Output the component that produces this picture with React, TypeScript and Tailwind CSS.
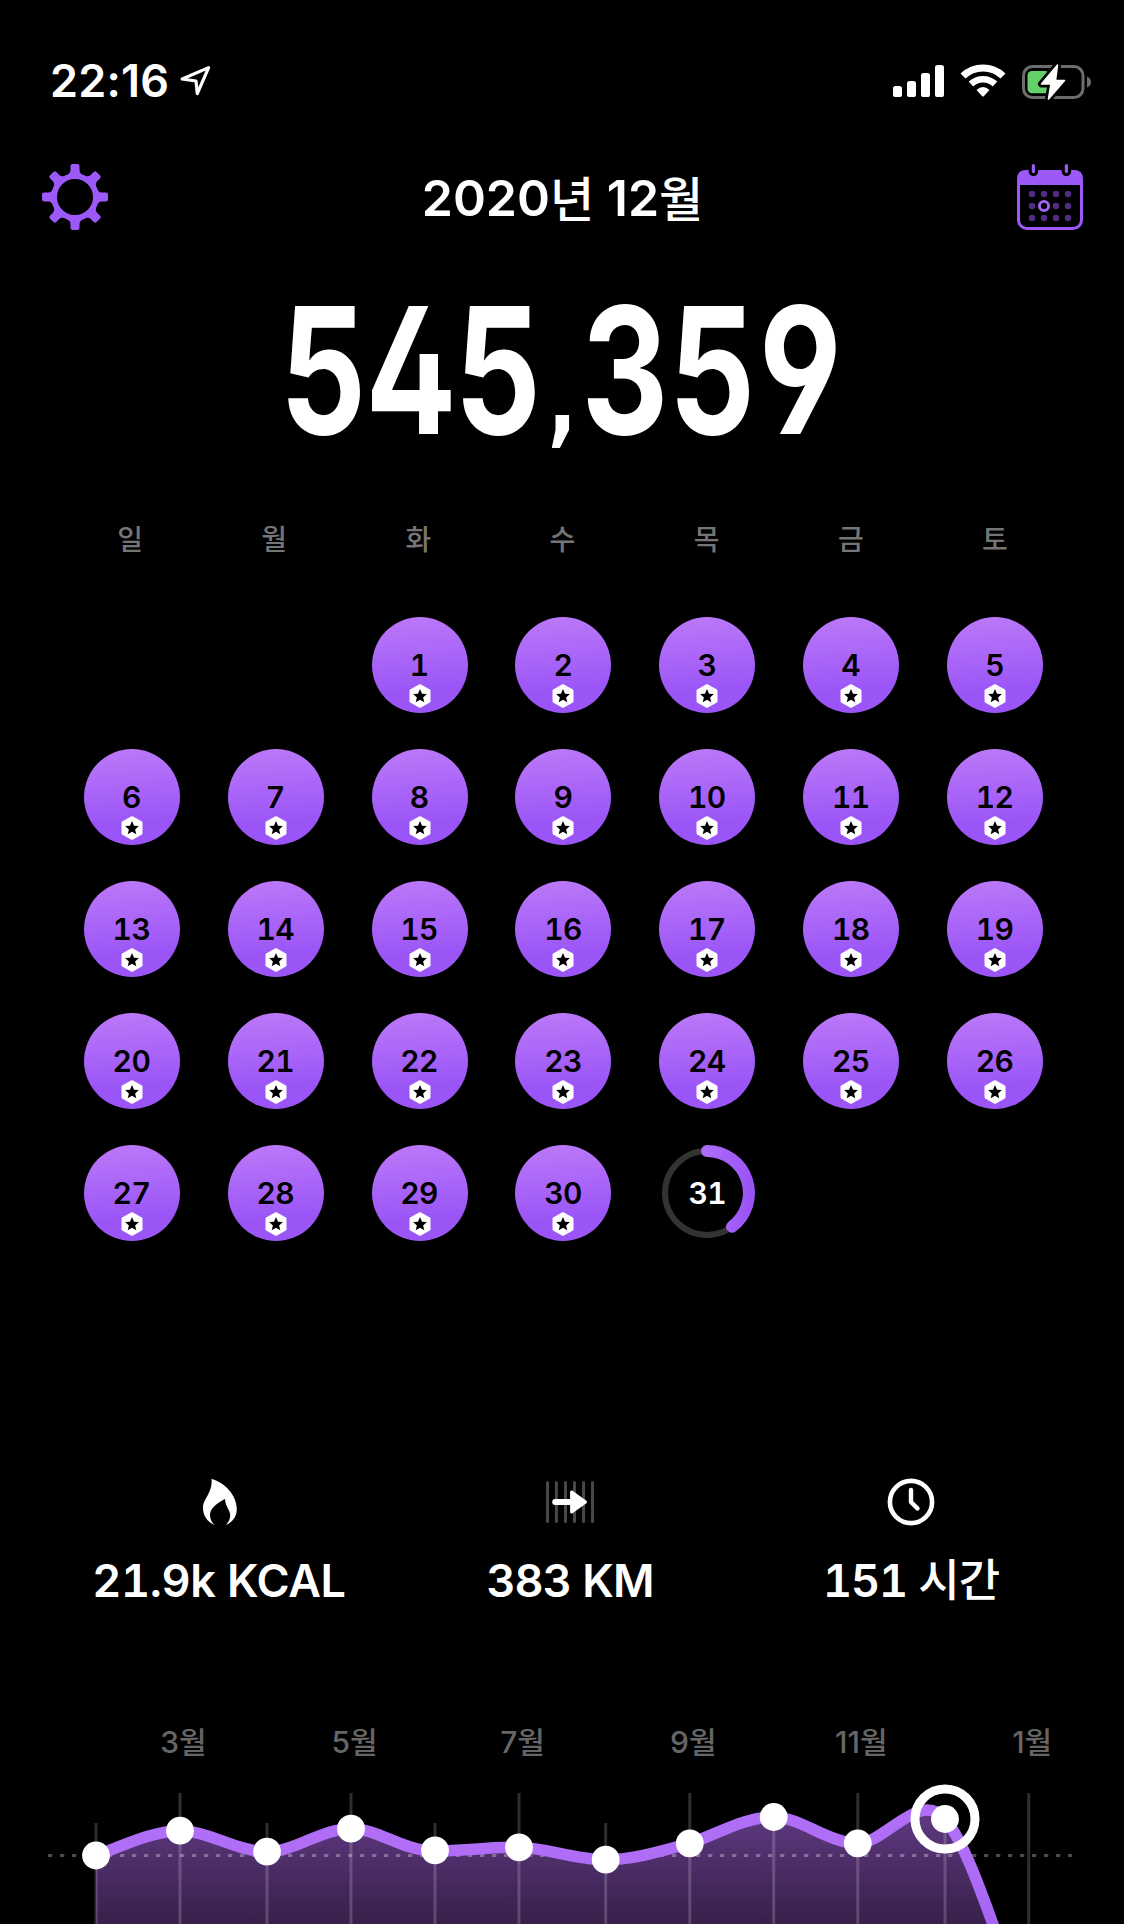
import React from "react";

interface ChartPoint {
    x: number;
    y: number;
    label?: string;
}

const weekdays = ["일", "월", "화", "수", "목", "금", "토"];

const stats = [
    { id: "kcal", value: "21.9k", unit: "KCAL", width: "w-[342px]", tracking: "tracking-[-0.4px]" },
    { id: "distance", value: "383", unit: "KM", width: "w-[360px]", tracking: "tracking-[-0.9px]" },
    { id: "time", value: "151", unit: "시간", width: "w-[322px]", tracking: "tracking-[-1px]" },
];

const points: ChartPoint[] = [
    { x: 96, y: 155.5 },
    { x: 180, y: 130.7, label: "3월" },
    { x: 267, y: 151.7 },
    { x: 351, y: 128.7, label: "5월" },
    { x: 435, y: 150.3 },
    { x: 519, y: 147.3, label: "7월" },
    { x: 605.7, y: 159.7 },
    { x: 689.8, y: 143.3, label: "9월" },
    { x: 773.7, y: 117 },
    { x: 857.8, y: 143.3, label: "11월" },
    { x: 945, y: 119 },
];

const curve =
    "M96 155.5 C118 148 152 130.7 180 130.7 C208 130.7 238 151.7 267 151.7 C295 151.7 321 128.7 351 128.7 " +
    "C379 128.7 402 151 435 151 C463 151 489 147 519 147.3 C547 148 574 159.7 605.7 159.7 " +
    "C633 159.7 662 151 689.8 143.3 C718 134 744 117 773.7 117 C800 117 829 143.3 857.8 143.3 " +
    "C885 143.3 920 89 945 119 C962 139 978 180 1014 284";

const StatusBar = () => (
    <div className="flex h-[130px] items-start justify-between pl-[50px] pr-[32px] pt-[60px]">
        <div className="flex items-start">
            <span className="w-[129px] whitespace-nowrap text-[45px] font-semibold leading-[42px] tracking-[0.2px]">22:16</span>
            <svg className="mt-[4px]" width="34" height="34" viewBox="0 0 34 34" fill="none" stroke="white" strokeWidth="3.2" strokeLinejoin="round">
                <path d="M29.6 3.6 L3.2 15 L17 17 L18.3 29.7 Z" />
            </svg>
        </div>
        <div className="flex items-start pt-[4px]">
            <svg width="51" height="34" viewBox="0 0 51 34" fill="white">
                <rect x="0" y="22" width="9" height="11" rx="2.6" />
                <rect x="14" y="17" width="9" height="16" rx="2.6" />
                <rect x="28" y="9" width="9" height="24" rx="2.6" />
                <rect x="42" y="1" width="9" height="32" rx="2.6" />
            </svg>
            <svg className="ml-[16px]" width="46" height="34" viewBox="0 0 46 34">
                <path d="M3 12 A29 29 0 0 1 43 12" fill="none" stroke="white" strokeWidth="7.2" />
                <path d="M11 20 A17.5 17.5 0 0 1 35 20" fill="none" stroke="white" strokeWidth="6.6" />
                <path d="M16.5 26 Q23 20 29.5 26 L24 32 Q23 33 22 32 Z" fill="white" />
            </svg>
            <svg className="ml-[16px]" width="70" height="38" viewBox="0 -1 70 38">
                <rect x="1.5" y="1.5" width="59.5" height="31" rx="9" fill="none" stroke="#6d6d6d" strokeWidth="3" />
                <path d="M65 11.5 Q69 13 69 17 Q69 21 65 22.5 Z" fill="#6d6d6d" />
                <rect x="5.5" y="6" width="22" height="22.3" rx="4.5" fill="#65cf6a" />
                <path d="M35.5 0 L19.5 19 L29 19 L26.5 34 L42.5 15.5 L33.5 15.5 Z" fill="white" stroke="black" strokeWidth="7" strokeLinejoin="round" />
                <path d="M35.5 0 L19.5 19 L29 19 L26.5 34 L42.5 15.5 L33.5 15.5 Z" fill="white" stroke="white" strokeWidth="1.6" strokeLinejoin="round" />
            </svg>
        </div>
    </div>
);

const GearIcon = () => (
    <svg width="66" height="66" viewBox="-33 -33 66 66" fill="#9d58f8">
        <circle r="20.8" fill="none" stroke="#9d58f8" strokeWidth="5.6" />
        {[0, 45, 90, 135, 180, 225, 270, 315].map((angle) => (
            <path
                key={angle}
                transform={`rotate(${angle})`}
                d="M-9.8 -21.4 C-6.5 -22.6 -4.5 -24 -4.5 -27 V-31 Q-4.5 -33 -2.5 -33 H2.5 Q4.5 -33 4.5 -31 V-27 C4.5 -24 6.5 -22.6 9.8 -21.4 Z"
            />
        ))}
    </svg>
);

const CalendarIcon = () => (
    <svg width="66" height="66" viewBox="0 0 66 66">
        <rect x="1.5" y="7.5" width="63" height="57" rx="8.5" fill="none" stroke="#9d58f8" strokeWidth="3" />
        <path d="M0 21 V15 Q0 6 9 6 H57 Q66 6 66 15 V21 Z" fill="#9d58f8" />
        {[16.4, 49.4].map((x) => (
            <g key={x} strokeLinecap="round">
                <path d={`M${x} 1.5 V7.5`} stroke="black" strokeWidth="9.4" />
                <path d={`M${x} 1.6 V7.6`} stroke="#9d58f8" strokeWidth="3.2" />
            </g>
        ))}
        {[30, 42, 54].map((y) =>
            [15, 27, 39, 51].map((x) => <circle key={`${x}-${y}`} cx={x} cy={y} r="3.2" fill="#512c80" />)
        )}
        <circle cx="27" cy="42" r="4.6" fill="black" stroke="#a465f7" strokeWidth="2.9" />
    </svg>
);

// Jour avec objectif atteint
const DayCircle = ({ day }: { day: number }) => (
    <div className="relative flex h-24 w-24 items-center justify-center rounded-full bg-[linear-gradient(175deg,#bb78f8_3%,#9b55f7_75%)]">
        <span className="pr-px text-[30px] font-[560] leading-none tracking-[-0.6px] tabular-nums text-black">{day}</span>
        <svg className="absolute left-[37px] top-[67px]" width="22" height="24" viewBox="-11 -12 22 24">
            <path d="M0 -10.6 L9.3 -5.5 V5.5 L0 10.6 L-9.3 5.5 V-5.5 Z" fill="white" stroke="white" strokeWidth="2.4" strokeLinejoin="round" />
            <path d="M0 -6.9 L2 -2.3 L6.9 -1.9 L3.1 1.4 L4.3 6.3 L0 3.7 L-4.3 6.3 L-3.1 1.4 L-6.9 -1.9 L-2 -2.3 Z" fill="black" />
        </svg>
    </div>
);

// Jour en cours
const TodayRing = ({ day }: { day: number }) => (
    <div className="relative flex h-24 w-24 items-center justify-center">
        <svg className="absolute inset-0" width="96" height="96" viewBox="-48 -48 96 96" fill="none">
            <defs>
                <linearGradient id="ring" x1="0" y1="0" x2="1" y2="0">
                    <stop offset="0" stopColor="#ad6bf8" />
                    <stop offset="1" stopColor="#9b55f7" />
                </linearGradient>
            </defs>
            <circle r="42" stroke="#333333" strokeWidth="6" />
            <path d="M0 -42 A42 42 0 0 1 25 33.7" stroke="url(#ring)" strokeWidth="12" strokeLinecap="round" />
        </svg>
        <span className="text-[30px] font-[560] leading-none tracking-[-0.6px] tabular-nums text-white">{day}</span>
    </div>
);

const StatIcon = ({ id }: { id: string }) => {
    if (id === "kcal") {
        return (
            <svg width="39" height="50" viewBox="0 0 39 50" fill="white">
                <path d="M11.6 2.7 C25 7 36.8 19 36.8 33 C36.8 41 32 46.5 25.8 49 C28.6 46 30.2 43 30.2 39.5 C30.2 34 25.5 31 25 23 C14.5 28 10 34 10 39 C10 43 12 47 14.8 49 C7 46 3 39 3 32 C3 22 12.5 18 11.6 2.7 Z" />
            </svg>
        );
    }
    if (id === "distance") {
        return (
            <svg width="48" height="50" viewBox="0 0 48 50">
                <path d="M1.5 6.5V45.5M10.4 6.5V45.5M19.5 6.5V45.5M28.5 6.5V45.5M37.6 6.5V45.5M46.5 6.5V45.5" stroke="#484848" strokeWidth="3" strokeLinecap="round" />
                <path d="M9.2 26 H26" stroke="white" strokeWidth="6" strokeLinecap="round" />
                <path d="M25.6 16 L39.5 26 L25.6 36 Z" fill="white" stroke="white" strokeWidth="3" strokeLinejoin="round" />
            </svg>
        );
    }
    return (
        <svg width="48" height="50" viewBox="0 0 48 50" fill="none" stroke="white">
            <circle cx="24" cy="26" r="21.1" strokeWidth="4.6" />
            <path d="M24 14 V26 L30.5 32.5" strokeWidth="4.4" strokeLinecap="round" strokeLinejoin="round" />
        </svg>
    );
};

const MonthChart = () => (
    <svg className="block" width="1124" height="224" viewBox="0 0 1124 224">
        <defs>
            <linearGradient id="area" gradientUnits="userSpaceOnUse" x1="0" y1="110" x2="0" y2="224">
                <stop offset="0" stopColor="#603a82" />
                <stop offset="1" stopColor="#37204b" />
            </linearGradient>
            <linearGradient id="stroke" gradientUnits="userSpaceOnUse" x1="0" y1="150" x2="0" y2="230">
                <stop offset="0" stopColor="#b06ef6" />
                <stop offset="1" stopColor="#a764f6" />
            </linearGradient>
        </defs>
        <path d={`${curve} H96 Z`} fill="url(#area)" />
        {points.map((point) => (
            <path key={point.x} d={`M${point.x} ${point.label ? 93 : 123} V224`} stroke="white" strokeOpacity="0.18" strokeWidth="3" />
        ))}
        <path d="M1028.7 93 V224" stroke="white" strokeOpacity="0.18" strokeWidth="3" />
        <path d="M48 155.5 H1072" stroke="white" strokeOpacity="0.3" strokeWidth="3" strokeDasharray="4.3 7.7" />
        <path d={curve} fill="none" stroke="url(#stroke)" strokeWidth="11.5" />
        {points.map((point) => (
            <circle key={point.x} cx={point.x} cy={point.y} r="13.9" fill="white" />
        ))}
        <circle cx="945" cy="119" r="30" fill="none" stroke="white" strokeWidth="9" />
        {[...points, { x: 1028.7, y: 0, label: "1월" }].map((point) =>
            point.label ? (
                <text key={point.x} x={point.x + 3.5} y="53" textAnchor="middle" fill="#666666" className="text-[30px] font-medium">
                    {point.label}
                </text>
            ) : null
        )}
    </svg>
);

const App = () => {
    return (
        <main className="flex h-[1924px] w-[1124px] flex-col overflow-hidden bg-black font-['Inter','Noto_Sans_CJK_KR',sans-serif] text-white">
            <StatusBar />

            {/* Titre du mois */}
            <header className="flex h-[134px] items-center justify-between pl-[42px] pr-[41px]">
                <GearIcon />
                <h1 className="whitespace-nowrap pt-[2px] text-[50px] font-semibold leading-none">
                    2020<span className="align-[-1px] text-[48px] font-medium leading-none">년</span> 12
                    <span className="align-[-1px] text-[48px] font-medium leading-none">월</span>
                </h1>
                <CalendarIcon />
            </header>

            {/* Total des pas */}
            <div className="flex h-[240px] justify-center">
                <div className="origin-center scale-x-[0.767] whitespace-nowrap text-[176px] font-bold leading-[212px] [font-feature-settings:'cv02','cv03','cv04','tnum']">
                    545
                    <span className="inline-block w-[52px] text-center font-['DejaVu_Sans'] text-[100px] leading-none">,</span>
                    359
                </div>
            </div>

            <section className="h-[938px] pl-[60px] pr-[57px]">
                <div className="-ml-0.5 grid h-[113px] grid-cols-7 pt-[15px] text-center text-[28px] font-medium leading-[42px] text-[#757575]">
                    {weekdays.map((name) => (
                        <span key={name}>{name}</span>
                    ))}
                </div>
                <div className="grid grid-cols-7 justify-items-center gap-y-9">
                    {Array.from({ length: 31 }, (_, i) => i + 1).map((day) => (
                        <div key={day} className={day === 1 ? "col-start-3" : ""}>
                            {day === 31 ? <TodayRing day={day} /> : <DayCircle day={day} />}
                        </div>
                    ))}
                </div>
            </section>

            {/* Statistiques */}
            <section className="flex h-[258px] pl-[48px] pt-[34px]">
                {stats.map((stat) => (
                    <div key={stat.id} className={`flex flex-col items-center gap-[27px] ${stat.width}`}>
                        <StatIcon id={stat.id} />
                        <span className={`whitespace-nowrap text-[45px] font-[570] leading-[56px] tabular-nums ${stat.tracking}`}>
                            {stat.value} <span className={stat.id === "time" ? "font-medium" : ""}>{stat.unit}</span>
                        </span>
                    </div>
                ))}
            </section>

            <MonthChart />
        </main>
    );
};

export default App;
